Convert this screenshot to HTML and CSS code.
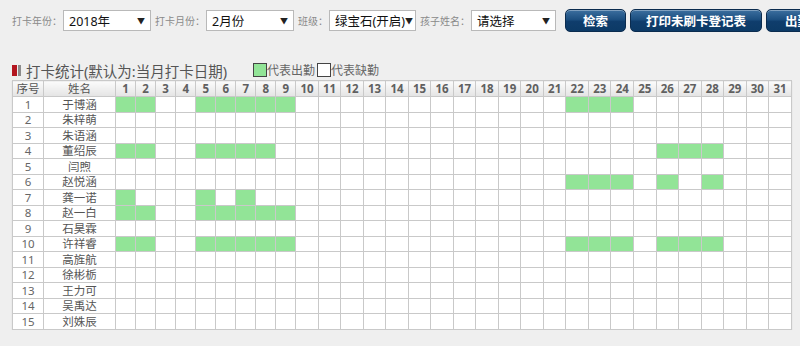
FILE: index.html
```html
<!DOCTYPE html>
<html lang="zh-CN">
<head>
    <meta charset="UTF-8">
    <meta name="viewport" content="width=device-width, initial-scale=1.0">
    <title>打卡统计</title>
    <link rel="stylesheet" href="styles.css">
</head>
<body>
    <div class="toolbar">
        <span class="field-label">打卡年份：</span>
        <div class="select sel-year"><span>2018年</span><span class="arrow">▼</span></div>
        <span class="field-label">打卡月份：</span>
        <div class="select sel-month"><span>2月份</span><span class="arrow">▼</span></div>
        <span class="field-label">班级：</span>
        <div class="select sel-class"><span>绿宝石(开启)</span><span class="arrow">▼</span></div>
        <span class="field-label">孩子姓名：</span>
        <div class="select sel-child"><span>请选择</span><span class="arrow">▼</span></div>
        <button class="btn btn-search">检索</button>
        <button class="btn btn-print">打印未刷卡登记表</button>
        <button class="btn btn-export">出勤导出</button>
    </div>

    <div class="section-head">
        <span class="head-icon"><i class="bar-red"></i><i class="bar-grey"></i></span>
        <span class="head-title">打卡统计(默认为:当月打卡日期)</span>
        <span class="legend"><i class="box box-on"></i>代表出勤</span>
        <span class="legend"><i class="box"></i>代表缺勤</span>
    </div>

    <table class="attendance" id="attendance">
        <colgroup id="cols"></colgroup>
        <thead><tr id="headRow"><th>序号</th><th>姓名</th></tr></thead>
        <tbody id="rows"></tbody>
    </table>

    <script>
        // attendance days per child for the month
        const children = [
            ['于博涵', [1, 2, 5, 6, 7, 8, 9, 22, 23, 24]],
            ['朱梓萌', []],
            ['朱语涵', []],
            ['董绍辰', [1, 2, 5, 6, 7, 8, 26, 27, 28]],
            ['闫煦', []],
            ['赵悦涵', [22, 23, 24, 26, 28]],
            ['龚一诺', [1, 5, 7]],
            ['赵一白', [1, 2, 5, 6, 7, 8, 9]],
            ['石昊霖', []],
            ['许祥睿', [1, 2, 5, 6, 7, 8, 9, 22, 23, 24, 26, 27, 28]],
            ['高旌航', []],
            ['徐彬栃', []],
            ['王力可', []],
            ['吴禹达', []],
            ['刘姝辰', []]
        ];
        const days = 31;

        const cols = document.getElementById('cols');
        const headRow = document.getElementById('headRow');
        cols.innerHTML = '<col class="c-no"><col class="c-name">';
        for (let d = 1; d <= days; d++) {
            cols.innerHTML += '<col class="' + (d < 10 ? 'c-day' : 'c-day2') + '">';
            const th = document.createElement('th');
            th.className = 'day';
            th.textContent = d;
            headRow.appendChild(th);
        }

        const body = document.getElementById('rows');
        children.forEach(([name, present], i) => {
            const tr = document.createElement('tr');
            tr.innerHTML = '<td class="no">' + (i + 1) + '</td><td class="name">' + name + '</td>';
            for (let d = 1; d <= days; d++) {
                const td = document.createElement('td');
                if (present.includes(d)) td.className = 'on';
                tr.appendChild(td);
            }
            body.appendChild(tr);
        });
    </script>
</body>
</html>
```

FILE: styles.css
```css
body {
    font-family: "Noto Sans", "Noto Sans CJK SC", sans-serif;
    background-color: #efefef;
    margin: 0;
    padding: 9px 0 0 12px;
    overflow: hidden;
}
.toolbar {
    display: flex;
    align-items: center;
    white-space: nowrap;
    height: 23px;
}
.toolbar > * {
    flex-shrink: 0;
}
.field-label {
    font-size: 10px;
    color: #8a8a8a;
    margin-right: 1px;
}
.select {
    display: flex;
    justify-content: space-between;
    align-items: center;
    box-sizing: border-box;
    height: 21px;
    padding: 0 5px 0 5px;
    background-color: #fff;
    border: 1px solid #b9b9b9;
    font-size: 12.5px;
    color: #111;
    margin-right: 4px;
}
.select .arrow {
    font-size: 8px;
    color: #222;
}
.sel-year { width: 88px; }
.sel-month { width: 88px; }
.sel-class { width: 87px; padding-right: 2px; }
.sel-child { width: 85px; }
.btn {
    height: 23px;
    box-sizing: border-box;
    border: 1px solid #0b2c4f;
    border-radius: 5px;
    background: linear-gradient(#3c6f9f, #1c4f80 45%, #0f3d6c 55%, #0c3a66);
    box-shadow: inset 0 1px 0 rgba(255, 255, 255, 0.35);
    color: #fff;
    font-family: "Noto Sans CJK SC", sans-serif;
    font-size: 12.5px;
    font-weight: bold;
    padding: 0;
    margin-left: 4px;
    cursor: pointer;
}
.btn-search { width: 61px; margin-left: 5px; }
.btn-print { width: 132px; }
.btn-export { width: 90px; text-align: left; padding-left: 18px; }

.section-head {
    display: flex;
    align-items: center;
    height: 20px;
    margin-top: 28px;
    color: #555;
}
.head-icon {
    display: flex;
    gap: 1px;
    margin-right: 5px;
}
.head-icon i {
    display: block;
    height: 11px;
}
.bar-red { width: 5px; background-color: #b3161f; }
.bar-grey { width: 3px; background-color: #8c8c8c; }
.head-title {
    font-size: 14.5px;
    margin-right: 26px;
}
.legend {
    display: flex;
    align-items: center;
    font-size: 12px;
    color: #666;
    margin-right: 2px;
}
.box {
    display: block;
    width: 12px;
    height: 12px;
    border: 1px solid #444;
    background-color: #fff;
}
.box-on {
    background-color: #92e497;
}

.attendance {
    border-collapse: collapse;
    table-layout: fixed;
    width: 780px;
    background-color: #fff;
    box-shadow: 0 1px 1px rgba(0, 0, 0, 0.12);
}
.c-no { width: 31px; }
.c-name { width: 72px; }
.c-day { width: 20px; }
.c-day2 { width: 22.5px; }
.attendance th,
.attendance td {
    border: 1px solid #c9c9c9;
    padding: 0;
    text-align: center;
    font-size: 11.5px;
    line-height: 13px;
}
.attendance th {
    height: 15px;
    background: linear-gradient(#fbfbfb, #e4e4e4);
    color: #555;
    font-weight: normal;
}
.attendance th.day {
    font-family: "Open Sans", sans-serif;
    font-weight: bold;
    font-size: 11.5px;
    color: #606060;
}
.attendance td {
    height: 14.5px;
    color: #555;
}
.attendance td.no {
    color: #666;
}
.attendance td.on {
    background-color: #92e497;
}
```
